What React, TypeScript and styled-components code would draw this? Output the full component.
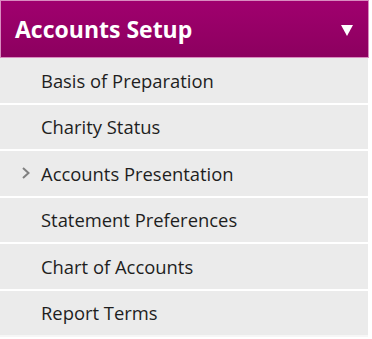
import React from 'react';
import styled, { createGlobalStyle } from 'styled-components';

const GlobalStyle = createGlobalStyle`
    body {
        margin: 0;
        background: #ffffff;
        font-family: "Open Sans", "Liberation Sans", sans-serif;
    }
`;

const Panel = styled.div`
    width: 369px;
`;

const Header = styled.div`
    height: 56px;
    display: flex;
    align-items: center;
    justify-content: space-between;
    padding: 0 15px 0 14px;
    background: linear-gradient(to bottom, #a0006e, #8c005f);
    border: 1px solid #d98cc0;
    color: #ffffff;
`;

const Title = styled.h2`
    margin: 0;
    font-size: 23px;
    font-weight: 700;
`;

const Caret = styled.span`
    width: 0;
    height: 0;
    margin-top: 2px;
    border-left: 6px solid transparent;
    border-right: 6px solid transparent;
    border-top: 11px solid #ffffff;
`;

const List = styled.ul`
    list-style: none;
    margin: 0;
    padding: 0;
    width: 368px;
    background: #ebebeb;
`;

const Item = styled.li`
    height: 44.5px;
    display: flex;
    align-items: center;
    gap: 9px;
    padding-left: 21px;
    border-bottom: 2px solid #ffffff;
    font-size: 18.4px;
    color: #1e1e1e;
    &:last-child {
        border-bottom: 2px solid #f6f6f6;
    }
`;

const Chevron = styled.span<{ $show?: boolean }>`
    width: 11px;
    display: flex;
    visibility: ${p => (p.$show ? 'visible' : 'hidden')};
`;

const items = [
    'Basis of Preparation',
    'Charity Status',
    'Accounts Presentation',
    'Statement Preferences',
    'Chart of Accounts',
    'Report Terms',
];

export default function App() {
    return <>
        <GlobalStyle />
        <Panel>
            <Header>
                <Title>Accounts Setup</Title>
                <Caret />
            </Header>
            <List>
                {items.map(label => (
                    <Item key={label}>
                        <Chevron $show={label === 'Accounts Presentation'}>
                            <svg width="10" height="14" viewBox="0 0 10 14">
                                <path d="M2 2 L7.5 7 L2 12" fill="none" stroke="#808080" strokeWidth="2" />
                            </svg>
                        </Chevron>
                        {label}
                    </Item>
                ))}
            </List>
        </Panel>
    </>;
}
